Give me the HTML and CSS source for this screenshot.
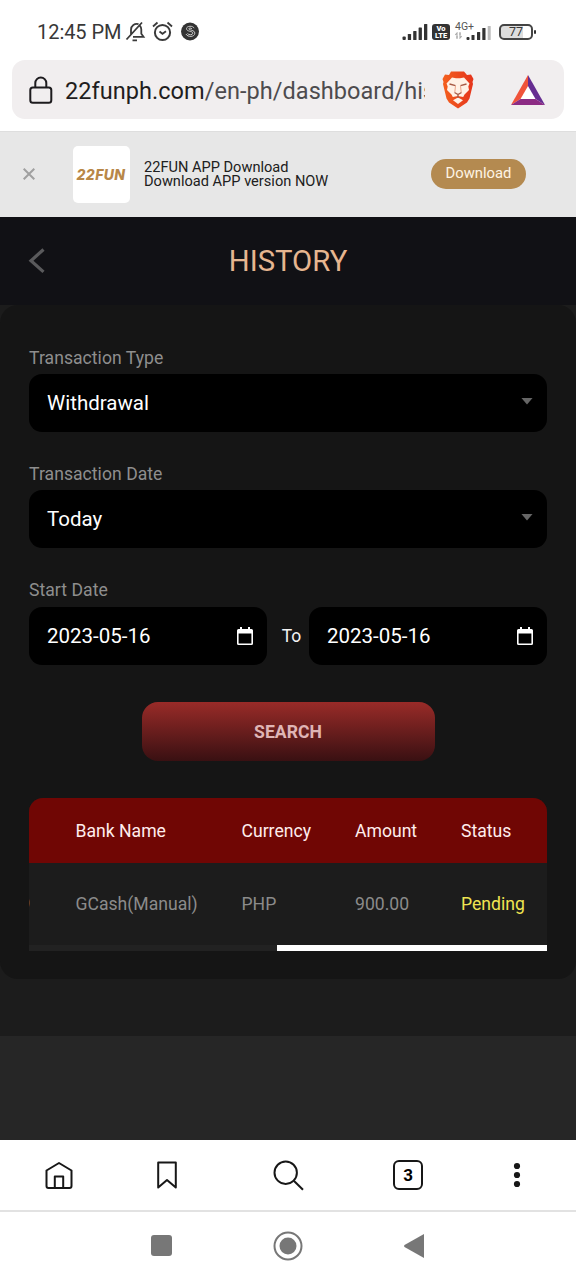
FILE: index.html
```html
<!DOCTYPE html>
<html lang="en">
<head>
<meta charset="utf-8">
<title>History</title>
<link rel="stylesheet" href="styles.css">
</head>
<body>
<div class="phone">
  <div class="status-bar">
    <span class="clock">12:45 PM</span>
    <svg class="status-left" width="76" height="24" viewBox="124 20 76 24" fill="none" stroke="#3a3a3a" stroke-width="1.800">
      <path d="M133 36.800h10.500l-2.200-3v-4.300a5.800 5.800 0 0 0-1.500-3.800M138.500 24.200a5.800 5.800 0 0 0-7.500 5.500v4.300M126.500 39.500l15.500-17M132.500 40.300h4.500"/>
      <circle cx="162.500" cy="32.500" r="7.600" stroke-width="2"/><path d="M153 26.500l4.500-4M172 26.500l-4.500-4M159.500 31.500l3 2.300 3.500-2.500"/>
      <circle cx="190" cy="31.500" r="9" fill="#333" stroke="none"/><path stroke="#ccc" stroke-width="1" d="M194 28.200c-.8-2.800-7.500-2.500-7.500.5 0 3.200 6.300 2 6.300 4.500 0 2-4.300 2-5.300.3M192 28.800c-1-1-3.200-1-3.200 0 0 1.500 6 1 6 4.400 0 4-7.300 4.300-8.800.8"/>
    </svg>
    <div class="status-right">
      <svg width="27" height="18" viewBox="401 23 27 18" fill="#333"><rect x="402.500" y="36.500" width="3.300" height="3.500" rx="1"/><rect x="407.800" y="34" width="3.300" height="6" rx=".6"/><rect x="413.200" y="31" width="3.300" height="9" rx=".6"/><rect x="418.600" y="27.500" width="3.300" height="12.500" rx=".6"/><rect x="424" y="24" width="3.300" height="16" rx=".6"/></svg>
      <span class="volte"><span>Vo</span><span>LTE</span></span>
      <span class="network"><span class="network-type">4G+</span><svg width="7" height="7" viewBox="0 0 7 7" fill="none" stroke="#aaa" stroke-width="1.100"><path d="M2 7V1L.3 3M5 0v6l1.700-2M1 5h2M4 2h2"/></svg></span>
      <svg class="signal-2" width="26" height="15" viewBox="466 26 26 15" fill="#333"><rect x="466.500" y="37" width="3" height="3" rx="1"/><rect x="471.500" y="35" width="3" height="5" rx=".5"/><rect x="477" y="32" width="3.200" height="8" rx=".5"/><rect x="482.300" y="28" width="3.200" height="12" rx=".5"/><rect x="487.700" y="26" width="3" height="14" rx=".5" fill="#bbb"/></svg>
      <span class="battery">77</span>
    </div>
  </div>

  <div class="address-wrap">
    <div class="address-bar">
      <svg width="24" height="28" viewBox="0 0 24 28" fill="none" stroke="#1d1b1e" stroke-width="2"><rect x="1.300" y="11.500" width="21" height="15.200" rx="2.500"/><path d="M6.300 11.500V7a5.500 5.500 0 0 1 11 0v4.500"/></svg>
      <div class="url">22funph.com<span class="url-path">/en-ph/dashboard/his</span></div>
      <svg class="brave" width="34" height="38" viewBox="0 0 34 38">
        <defs><linearGradient id="flame"><stop stop-color="#f4601e"/><stop offset="1" stop-color="#e5341c"/></linearGradient></defs>
        <path fill="url(#flame)" d="M10 .5h13l3 3.500 4-.5 2.500 4.500-1 3 .5 2-3.500 14.500-2.500 4L17 37.500 8 31.500l-2.500-4L2 13l.5-2-1-3L4 3.500 8 4z"/>
        <path fill="#fff1e6" d="M11 6.500l4 .8h4l4-.8 5.500 6-1.200 3 .7 3.500-4.500 4.500-1.300 2.500-5.200-1-5.200 1-1.300-2.500L6 19l.7-3.500-1.200-3z"/>
        <path fill="#fff1e6" d="M17 26.500l5 2.700L17 33l-5-3.800z"/>
        <path fill="none" stroke="#a85a45" stroke-width="1.400" d="M8.500 13l6 1.700M25.500 13l-6 1.700M13.500 21.500l3.500 2 3.500-2M17 23.500V27"/>
        <path fill="none" stroke="#eda58a" stroke-width="1" d="M14.500 15l-.7 6M19.500 15l.7 6"/>
      </svg>
      <svg class="bat" width="34" height="31" viewBox="0 0 34 31"><path fill="#fff" d="M17 9l9 16H8z"/><path fill="#f0533a" d="M17 0v11L9.500 24 0 30z"/><path fill="#662d91" d="M17 0l17 30-9.500-6L17 11z"/><path fill="#8c2b84" d="M0 30l9.500-6h15L34 30z"/></svg>
    </div>
  </div>

  <div class="promo">
    <svg class="close" width="12" height="12" viewBox="0 0 12 12" stroke="#a0a0a0" stroke-width="2"><path d="M.7.7l10.600 10.600M11.300.7L.7 11.300"/></svg>
    <div class="logo"><span>22FUN</span></div>
    <div class="promo-text"><div>22FUN APP Download</div><div>Download APP version NOW</div></div>
    <div class="download">Download</div>
  </div>

  <div class="page">
    <div class="title-bar">
      <svg width="17" height="26" viewBox="0 0 17 26" fill="none" stroke="#5a5a5c" stroke-width="3.200"><path d="M15.500 1.500L3 12.700l12.500 11.200"/></svg>
      <h1>HISTORY</h1>
    </div>
    <main class="panel">
      <div class="field">
        <label>Transaction Type</label>
        <div class="control">Withdrawal<i class="caret"></i></div>
      </div>
      <div class="field">
        <label>Transaction Date</label>
        <div class="control">Today<i class="caret"></i></div>
      </div>
      <div class="field date-field">
        <label>Start Date</label>
        <div class="dates">
          <div class="control"><span>2023-05-16</span><svg width="16" height="19" viewBox="0 0 16 19"><path fill="#fff" fill-rule="evenodd" d="M3 0h2v2h6V0h2v2h1.500Q16 2 16 3.500v13Q16 18 14.500 18h-13Q0 18 0 16.500v-13Q0 2 1.500 2H3zM1.600 6.500v9.900h12.800V6.500z"/></svg></div>
          <span class="to">To</span>
          <div class="control"><span>2023-05-16</span><svg width="16" height="19" viewBox="0 0 16 19"><path fill="#fff" fill-rule="evenodd" d="M3 0h2v2h6V0h2v2h1.500Q16 2 16 3.500v13Q16 18 14.500 18h-13Q0 18 0 16.500v-13Q0 2 1.500 2H3zM1.600 6.500v9.900h12.800V6.500z"/></svg></div>
        </div>
      </div>
      <div class="search">SEARCH</div>
      <div class="table">
        <div class="row head"><span></span><span>Bank Name</span><span>Currency</span><span>Amount</span><span>Status</span></div>
        <div class="row"><span class="clipped">9</span><span>GCash(Manual)</span><span>PHP</span><span>900.00</span><span class="pending">Pending</span></div>
        <div class="scroll-track"><div class="scroll-thumb"></div></div>
      </div>
    </main>
  </div>
  <div class="page-end"></div>

  <div class="browser-nav">
    <svg width="28" height="29" viewBox="0 0 28 29" fill="none" stroke="#171717" stroke-width="2" stroke-linejoin="round"><path d="M1.500 9.500L14 2l12.500 7.500V25q0 2-2 2h-21q-2 0-2-2zM9.800 27V15.500h8.400V27"/></svg>
    <svg class="bookmark" width="20" height="28" viewBox="0 0 20 28" fill="none" stroke="#171717" stroke-width="2" stroke-linejoin="round"><path d="M1.200 1.500h17.600v25L10 19l-8.800 7.500z"/></svg>
    <svg width="31" height="31" viewBox="0 0 31 31" fill="none" stroke="#171717" stroke-width="2"><circle cx="12.700" cy="12.700" r="11.200"/><path d="M20.800 20.800l9.200 9"/></svg>
    <span class="tabs">3</span>
    <svg width="8" height="26" viewBox="0 0 8 26" fill="#171717"><circle cx="4" cy="4" r="3.100"/><circle cx="4" cy="13" r="3.100"/><circle cx="4" cy="22" r="3.100"/></svg>
  </div>
  <div class="system-nav">
    <i class="recent"></i>
    <svg width="30" height="30" viewBox="0 0 30 30"><circle cx="15" cy="15" r="13.500" fill="none" stroke="#777" stroke-width="2"/><circle cx="15" cy="15" r="8.500" fill="#777"/></svg>
    <svg width="22" height="26" viewBox="0 0 22 26"><path fill="#777" d="M21 1L1.500 12q-1 1 0 2L21 25z"/></svg>
  </div>
</div>
</body>
</html>
```

FILE: styles.css
```css
* { box-sizing: border-box; }
body { margin: 0; font-family: Roboto, sans-serif; background: #fff; }
svg { display: block; flex: none; }
.phone { width: 576px; height: 1280px; overflow: hidden; display: flex; flex-direction: column; }
.phone > * { flex: none; }

.status-bar { height: 60px; padding: 4px 43px 0 37px; display: flex; align-items: center; color: #383838; }
.clock { width: 87px; font-size: 20px; letter-spacing: -0.05px; white-space: nowrap; }
.status-left { margin-bottom: 1px; }
.status-right { margin-left: auto; display: flex; align-items: center; }
.volte { width: 18px; height: 16px; margin: 0 5px 0 4px; border-radius: 3px; background: #333; color: #fff; display: flex; flex-direction: column; align-items: center; justify-content: center; font-size: 7.5px; line-height: 7px; font-weight: 900; }
.network { width: 11px; height: 22px; color: #555; font-size: 10.5px; line-height: 11px; margin-top: -1px; }
.network-type { display: block; white-space: nowrap; }
.signal-2 { margin-top: 2px; }
.battery { position: relative; width: 34px; height: 16px; margin-left: 7px; border: 2px solid #444; border-radius: 5px; background: linear-gradient(90deg, #ddd 75%, #fff 75%); font-size: 12.5px; line-height: 12.5px; text-align: center; }
.battery::after { content: ""; position: absolute; right: -5px; top: 4px; width: 2px; height: 4px; background: #333; border-radius: 1px; }

.address-wrap { height: 71px; padding: 0 12px; }
.address-bar { height: 59px; padding: 0 19px 0 17px; border-radius: 13px; background: #f1eeef; display: flex; align-items: center; }
.url { width: 360px; margin-left: 12px; overflow: hidden; white-space: nowrap; font-size: 23.5px; line-height: 32px; color: #1f1d20; letter-spacing: 0.05px; padding-top: 2px; }
.url-path { color: #4d4b4e; }
.brave { margin-left: 16px; }
.bat { margin-left: auto; margin-top: 2px; }

.promo { height: 86px; padding: 0 50px 1px 23px; background: #e7e7e7; border-top: 1px solid #dedede; display: flex; align-items: center; }
.logo { width: 57px; height: 57px; margin-left: 37.5px; border-radius: 5px; background: #fff; display: flex; align-items: center; justify-content: center; }
.logo span { color: #b88748; font-family: Inter, sans-serif; font-size: 14px; font-weight: 800; font-style: italic; letter-spacing: 0.4px; }
.promo-text { margin-left: 14.5px; font-size: 14.6px; line-height: 14.5px; color: #202020; white-space: nowrap; }
.download { width: 95px; height: 30px; margin-left: auto; border-radius: 15px; background: #b48a50; color: #fff4e4; font-size: 14.8px; line-height: 29px; text-align: center; }

.page { height: 819px; background: #1c1c1c; }
.title-bar { height: 88px; padding: 0 28px 1px; background: #111115; display: grid; grid-template-columns: 17px 1fr 17px; align-items: center; }
.title-bar h1 { margin: 0; font-size: 29.3px; line-height: 34px; font-weight: 400; text-align: center; color: #e6b690; }
.panel { height: 674px; padding: 40px 29px 0; border-radius: 18px; background: #151515; }
.field { margin-bottom: 29px; }
.field label { display: block; height: 29px; font-size: 17.6px; line-height: 26px; color: #8e8e8e; letter-spacing: 0.03px; }
.date-field label { height: 30px; }
.control { height: 58px; padding: 0 14px 0 18px; border-radius: 13px; background: #000; color: #fff; font-size: 20.5px; display: flex; align-items: center; justify-content: space-between; }
.caret { width: 12px; height: 7px; margin-top: -4px; background: #666; clip-path: polygon(0 0, 100% 0, 50% 100%); }
.dates { display: grid; grid-template-columns: 238px 1fr 238px; align-items: center; }
.to { text-align: center; color: #f2f2f2; font-size: 17.5px; padding-left: 7px; }
.search { width: 293px; height: 59px; margin: 37px auto; border-radius: 16px; background: linear-gradient(#992b28, #391012); color: #dfb5b5; font-size: 17.6px; line-height: 60px; font-weight: 700; text-align: center; }
.table { width: 518px; border-radius: 14px 14px 0 0; overflow: hidden; background: #1c1c1c; }
.row { height: 82px; display: grid; grid-template-columns: 46.5px 166px 113.500px 106px 86px; align-items: center; font-size: 17.6px; letter-spacing: 0; color: #8b8b8b; }
.head { height: 65px; background: #700604; color: #ffeded; }
.clipped { margin-left: -8.5px; }
.pending { color: #f0e552; }
.scroll-track { height: 6px; background: #222; display: flex; justify-content: flex-end; }
.scroll-thumb { width: 270px; background: #fff; }
.page-end { height: 104px; background: #262626; }

.browser-nav { height: 72px; padding: 0 55px 0 45px; border-bottom: 2px solid #e2e2e2; display: flex; align-items: center; justify-content: space-between; }
.bookmark { margin: 0 5.500px 0 -5.500px; }
.tabs { width: 30px; height: 30px; border: 2px solid #171717; border-radius: 6px; font-size: 17px; line-height: 26px; font-weight: 700; text-align: center; }
.system-nav { height: 68px; padding: 0 151px 1px; display: grid; grid-template-columns: 21px 1fr 22px; justify-items: center; align-items: center; }
.recent { width: 21px; height: 21px; background: #777; border-radius: 3px; }
```
